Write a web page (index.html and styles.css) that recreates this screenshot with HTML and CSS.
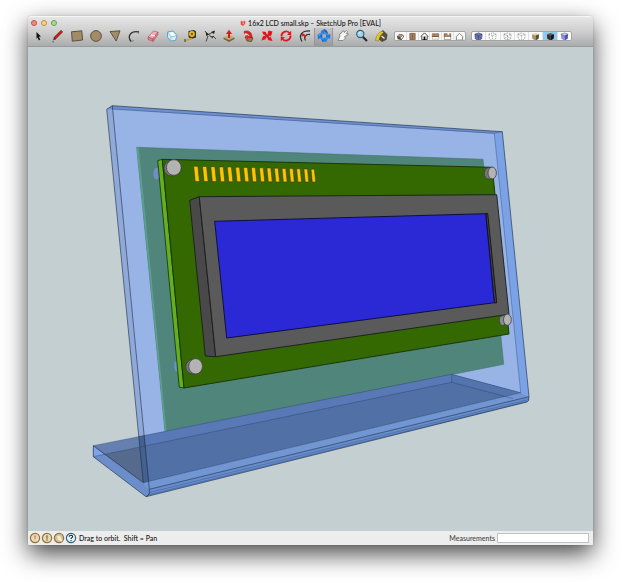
FILE: index.html
```html
<!DOCTYPE html>
<html lang="en">
<head>
<meta charset="utf-8">
<title>16x2 LCD small.skp – SketchUp Pro [EVAL]</title>
<link rel="stylesheet" href="styles.css">
</head>
<body>
<main class="window">
  <header class="chrome">
    <div class="titlebar">
      <div class="lights">
        <button class="light red" aria-label="Close"></button>
        <button class="light amber" aria-label="Minimize"></button>
        <button class="light green" aria-label="Zoom window"></button>
      </div>
      <h1 class="title">
        <svg class="doc" viewBox="0 0 8 8"><path d="M1 1l3 1 3-1v4L4 8 1 6z" fill="#e8503c"/><path d="M1 1l3 1 1-1-2-1z" fill="#f7c9c0"/><path d="M3 4l2-1v3z" fill="#fff" opacity=".7"/></svg>
        <span>16x2 LCD small.skp – SketchUp Pro [EVAL]</span>
      </h1>
    </div>
    <nav class="toolbar" aria-label="Tools">
      <div class="tools">
        <button class="tool" aria-label="Select"><svg viewBox="0 0 16 16"><path d="M5.500 4l4.500 4.500-2.200.3 1.500 2.800-1.400.8-1.400-2.900-1 1.200z" fill="#111"/></svg></button>
        <button class="tool" aria-label="Line"><svg viewBox="0 0 16 16"><path d="M4.500 10.500L12 3" stroke="#5a1512" stroke-width="2.600"/><path d="M4.500 10.500L12 3" stroke="#e2201d" stroke-width="1.700"/><path d="M3 12.500l1-3 1.800 1.800z" fill="#3a2a1c"/><path d="M2 13.500l2 .5" stroke="#555" stroke-width=".8"/></svg></button>
        <button class="tool" aria-label="Rectangle"><svg viewBox="0 0 16 16"><path d="M2.500 3.800l10.300-1 .8 9.200-10.300 1.200z" fill="#a38a68" stroke="#54493a" stroke-width=".9"/></svg></button>
        <button class="tool" aria-label="Circle"><svg viewBox="0 0 16 16"><circle cx="8" cy="8" r="5.400" fill="#a38a68" stroke="#54493a" stroke-width=".9"/></svg></button>
        <button class="tool" aria-label="Polygon"><svg viewBox="0 0 16 16"><path d="M3 3.600l10-.8L9.200 13z" fill="#a38a68" stroke="#54493a" stroke-width=".9"/></svg></button>
        <button class="tool" aria-label="Arc"><svg viewBox="0 0 16 16"><path d="M5 13.500C1 8 4.500 2.500 13 4" fill="none" stroke="#333" stroke-width="1.300"/><path d="M5 13.500l3-1M13 4l-1 2" stroke="#777" stroke-width=".8"/></svg></button>
        <button class="tool" aria-label="Eraser"><svg viewBox="0 0 16 16"><path d="M3 9l5.500-6 4.500 1-5 7z" fill="#f3a9b6" stroke="#b26572" stroke-width=".7"/><path d="M3 9l5 2v2.500l-5-2zM8 11l5-7v2.500l-5 7z" fill="#e07f90" stroke="#a85263" stroke-width=".6"/><path d="M6 7l4 1" stroke="#fff"/></svg></button>
        <button class="tool" aria-label="Make component"><svg viewBox="0 0 16 16"><path d="M3.500 4l5.500-1L13 7.500l-1.500 5-5 .5L3.500 9z" fill="#d6eef7" stroke="#62a5c1"/><path d="M3.500 4l3.500 5 6-1.500M7 9l-.5 4" fill="none" stroke="#7bb4cc" stroke-width=".7"/><path d="M5.500 5l3-.8 2.500 3-3 .8z" fill="#fff"/></svg></button>
        <button class="tool" aria-label="Tape measure"><svg viewBox="0 0 16 16"><path d="M5.500 3l5.500-1 2 1.500v6L8 11 5.500 9z" fill="#33302a"/><circle cx="9" cy="6" r="2.900" fill="#efbc1c"/><circle cx="9" cy="6" r="1.200" fill="#705d22"/><path d="M9 10.500L2.500 12.500" stroke="#d5a513" stroke-width="1.800"/><path d="M2 11v3" stroke="#333"/></svg></button>
        <button class="tool" aria-label="Dimension"><svg viewBox="0 0 16 16"><path d="M3 3l2 3M11 8l3 3M4 13.500L6 8M5.500 7L12 3.500M5 6c2 0 3 1 3.500 3" fill="none" stroke="#444"/><path d="M4 4l3 2.500L4 8zM13 2.500L9 4l3 2zM9 8l3 .5-2 2z" fill="#222"/></svg></button>
        <button class="tool" aria-label="Push/Pull"><svg viewBox="0 0 16 16"><path d="M2.500 9.500L8 7l5.500 2.500L8 12z" fill="#c9a56b"/><path d="M2.500 9.500L8 12l5.500-2.500V11L8 14l-5.500-3z" fill="#7e5e38"/><path d="M8 1.800L11 6H9v4H7V6H5z" fill="#e3161b"/></svg></button>
        <button class="tool" aria-label="Follow Me"><svg viewBox="0 0 16 16"><path d="M5 9l3-1.500 5 2.500-1.500 3.500L7 13z" fill="#9d7b4f" stroke="#503b22" stroke-width=".7"/><path d="M4 3.500c4.500-2 8.500 1 8 6.500l-2.500-.5c0-3-2-4.500-5-4z" fill="#df1f20" stroke="#7e1412" stroke-width=".5"/><path d="M5 7.500l5 .5-2.500 3.500z" fill="#e6251f"/><path d="M5 5.800c2 0 3.500.7 4 2" fill="none" stroke="#f6dcd6"/></svg></button>
        <button class="tool" aria-label="Move"><svg viewBox="0 0 16 16"><path d="M5 4.500l6 7M12 6l-8 4" stroke="#dd171b" stroke-width="2"/><path d="M9.500 2.500l4 1L12 8 8.500 6zM3 3.500l4.500.5L5 7.500zM2.500 12.500L4 8l3.500 3zM13.500 13L8.500 12l3-3.500z" fill="#dd171b"/></svg></button>
        <button class="tool" aria-label="Rotate"><svg viewBox="0 0 16 16"><path d="M3.500 8.500A4.600 4.600 0 0 1 11.500 5M12.500 7.500A4.600 4.600 0 0 1 4.500 11" fill="none" stroke="#dc1b1e" stroke-width="1.800"/><path d="M13.200 2.800V7H9zM2.800 13.200V9H7z" fill="#dc1b1e"/></svg></button>
        <button class="tool" aria-label="Offset"><svg viewBox="0 0 16 16"><path d="M5 13.500C1 7 5 2.500 13 3" fill="none" stroke="#333" stroke-width="1.300"/><path d="M8.500 12.500C6.500 9 8.500 6 13 6.500" fill="none" stroke="#333" stroke-width="1.300"/><path d="M9.500 8L5 4.500 4.500 8.500l2-.5 1.500 1.500z" fill="#dc1b1e"/></svg></button>
        <button class="tool active" aria-label="Orbit" aria-pressed="true"><svg viewBox="0 0 16 16"><path d="M7.500 2c4 1 5 6 2.500 10M6 4.500c-1.500 3-1 6 1.500 8.500" fill="none" stroke="#1c5fb5" stroke-width="2"/><path d="M2.500 7c3-2.500 8-2.500 11 1M3 9c3 2.500 7 2.500 10 .5" fill="none" stroke="#3794f5" stroke-width="2"/><path d="M9 1.500L4.500 3 8 6zM14.500 6l-.5 5-3.500-3zM1.500 6.500L2 11.500 5.500 9zM6 14l5-.5-2.500-4z" fill="#1f7ae4"/></svg></button>
        <button class="tool" aria-label="Pan"><svg viewBox="0 0 16 16"><path d="M3 12.500l2-4.500-.5-2 2-1 1-2 1.500 0 .3 1.500L11.500 2.500l1 1-1 2.500 1.500-.5 0 1.500-3.500 1.500 1 1.500-2.500 2.500z" fill="#f7f5f0" stroke="#777" stroke-width=".8"/></svg></button>
        <button class="tool" aria-label="Zoom"><svg viewBox="0 0 16 16"><path d="M8.500 8.500L13 13" stroke="#27292c" stroke-width="2.200"/><circle cx="6.300" cy="6" r="3.600" fill="#9fd4ec" stroke="#315a70" stroke-width="1.100"/><path d="M4.500 5.500l2-1.500" stroke="#fff"/></svg></button>
        <button class="tool" aria-label="Paint bucket"><svg viewBox="0 0 16 16"><path d="M6 7l4-4.500 4 4-.8 5L9 13.500 6 11z" fill="#57513c" stroke="#2c2a20" stroke-width=".6"/><path d="M2.500 12.500C3 8 5 5 9 3l1.500 1.500C7 7 6.500 10 5.500 13z" fill="#e5ca25" stroke="#7b6b16" stroke-width=".5"/><path d="M8.500 8l3 2.500" stroke="#f3eed8" stroke-width="1.300"/></svg></button>
      </div>
      <div class="segments views">
        <button aria-label="Iso"><svg viewBox="0 0 10 10"><path d="M1 5l3-3 4 1 1 2-3 4-4-1z" fill="#55483c"/><path d="M1.500 4.500l2.500-2 4 1-3 2z" fill="#b89d78"/><path d="M5 6l3-2v1.500L5.500 8z" fill="#eee"/></svg></button>
        <button aria-label="Top"><svg viewBox="0 0 10 10"><path d="M2 1.500h6v7H2z" fill="#a98157" stroke="#6e5335" stroke-width=".7"/><path d="M5 1.500v7" stroke="#6e5335" stroke-width=".7"/></svg></button>
        <button aria-label="Front"><svg viewBox="0 0 10 10"><path d="M1 5l4-4 4 4M2 4.500v4h6v-4" fill="#fff" stroke="#333"/><path d="M4 5h2v4H4z" fill="#111"/></svg></button>
        <button aria-label="Right"><svg viewBox="0 0 10 10"><path d="M1 1.500h8V5H1z" fill="#a98157"/><path d="M1.500 2v6h7V2" fill="none" stroke="#99938b" stroke-width=".6"/><path d="M1 5h8" stroke="#6e5335"/></svg></button>
        <button aria-label="Back"><svg viewBox="0 0 10 10"><path d="M1 1.500h8V5H1z" fill="#a98157"/><path d="M1.500 2v6.500h7V2M1 5h8" fill="none" stroke="#77685a" stroke-width=".7"/><path d="M5 1h2v2H5z" fill="#fff"/></svg></button>
        <button aria-label="Left"><svg viewBox="0 0 10 10"><path d="M1.500 5L5 1.500 8.500 5v4h-7z" fill="#fff" stroke="#555" stroke-width=".8"/></svg></button>
      </div>
      <div class="segments styles">
        <button aria-label="X-ray"><svg viewBox="0 0 10 10"><path d="M1 2.500L5 1l4 1.500-.5 5L5 9.500l-3.500-2z" fill="#747cae" stroke="#343b70" stroke-width=".7"/><path d="M1 2.500l4 1.500 4-1.500M5 4v5.500M2 7l3-2 3 2" fill="none" stroke="#30396f" stroke-width=".6"/></svg></button>
        <button aria-label="Back edges"><svg viewBox="0 0 10 10"><path d="M1 2.500L5 1l4 1.500-.5 5L5 9.500l-3.500-2zM1 2.500l4 1.500 4-1.500M5 4v5.500" fill="#fff" stroke="#777" stroke-width=".7" stroke-dasharray="1.500 1"/></svg></button>
        <button aria-label="Wireframe"><svg viewBox="0 0 10 10"><path d="M1 2.500L5 1l4 1.500-.5 5L5 9.500l-3.500-2zM1 2.500l4 1.500 4-1.500M5 4v5.500M2 7l3-2 3 2" fill="#fff" stroke="#777" stroke-width=".7" stroke-dasharray="2 1"/></svg></button>
        <button aria-label="Hidden line"><svg viewBox="0 0 10 10"><path d="M1 2.500L5 1l4 1.500-.5 5L5 9.500l-3.500-2zM1 2.500l4 1.500 4-1.500M5 4v5.500" fill="#fff" stroke="#888" stroke-width=".7" stroke-dasharray="2 .8"/></svg></button>
        <button aria-label="Shaded"><svg viewBox="0 0 10 10"><path d="M1 2.500L5 1l4 1.500L5 4z" fill="#e4d6a5"/><path d="M1 2.500L5 4v5.500l-3.500-2z" fill="#aa9865"/><path d="M9 2.500L5 4v5.500l3.500-2z" fill="#5e5132"/></svg></button>
        <button class="on" aria-label="Shaded with textures" aria-pressed="true"><svg viewBox="0 0 10 10"><path d="M1 2.500L5 1l4 1.500L5 4z" fill="#6a5844"/><path d="M1 2.500L5 4v5.500l-3.500-2z" fill="#352d25"/><path d="M9 2.500L5 4v5.500l3.500-2z" fill="#17130f"/></svg></button>
        <button aria-label="Monochrome"><svg viewBox="0 0 10 10"><path d="M1 2.500L5 1l4 1.500L5 4z" fill="#dedbc8"/><path d="M1 2.500L5 4v5.500l-3.500-2z" fill="#8b92d5"/><path d="M9 2.500L5 4v5.500l3.500-2z" fill="#4a53a5"/><path d="M1 2.500L5 1l4 1.500L5 4z" fill="none" stroke="#5c65c5" stroke-width=".7"/></svg></button>
      </div>
    </nav>
  </header>

  <svg class="model" viewBox="28 47 565 484" role="img" aria-label="LCD module on a clear acrylic stand">
    <!-- acrylic panel -->
    <path d="M112.300 105.700L502.300 131.700 529 397 149.300 490z" fill="#98b4e6"/>
    <path d="M106.700 109.300l5.600-3.600L149.300 490l-6-7.300z" fill="#8fa9d8"/>
    <path d="M106.700 109.300l5.600-3.600 390 26-8 2-382-24.500z" fill="#6d8fcd"/>
    <path d="M502.300 131.700l-8 1.600 26.400 259.400 8.300 4z" fill="#7ba2e6"/>
    <!-- back sheet -->
    <path d="M136.700 147.300L483 159.300l20.700 205L165 431.300z" fill="#4f857b" stroke="#47766f" stroke-width=".6"/>
    <path d="M136.700 147.300l2 .2L166.500 431l-1.500.3z" fill="#5c9f8e"/>
    <!-- base -->
    <path d="M93.300 445.700L140 436.400l4.300 46.300-51-26z" fill="#6580b0"/>
    <path d="M139 436.600l312.700-62.300 69 18.400L143.300 482.700z" fill="#5879b5"/>
    <path d="M104 454.500L141 447l2.300 35.700z" fill="#566a8d"/>
    <path d="M141 447l310.700-64.700 54 14L143.300 482.700z" fill="#5170a5"/>
    <path d="M139 436.600l5.500-1.100 4.800 48-6 -.8z" fill="#45618f"/>
    <path d="M451.700 374.300l69 18.400-15 3.600-54-14z" fill="#5474ae"/>
    <path d="M93.300 445.700v11l52.700 40 3.300-2.700v-4.500l-6-6.800z" fill="#6b8dc9"/>
    <path d="M93.300 445.700l11 8.800-11 2.200z" fill="#7ea3e6"/>
    <path d="M143.300 482.700l377.400-90 8.300 4-379.700 92.600z" fill="#7196d2"/>
    <path d="M149.300 489.300L529 396.700v3.500l-2 1.800L146 496.700z" fill="#688dcc"/>
    <path d="M149.300 492.500L528 399.700M148 495L527 401.500" stroke="#4f70aa" stroke-width=".9"/>
    <g fill="none" stroke="#1b2a45" stroke-opacity=".75" stroke-width=".8" stroke-linejoin="round">
      <path d="M106.700 109.300l5.600-3.600L502.300 131.700 529 396.700l-.5 4-1.500 1.300L146 496.700l-52.700-40v-11l50 37L106.700 109.300"/>
      <path d="M112.300 105.700L149.300 489.300v4.700l-3.300 2.700M149.300 489.300L529 396.700"/>
    </g>
    <g fill="none" stroke="#20365f" stroke-opacity=".5" stroke-width=".7">
      <path d="M93.300 445.700L451.700 374.300l69 18.400-377.400 90M451.700 374.300v8L93.300 456.700M451.700 382.300L513 398.500"/>
      <path d="M112.300 109l382 24.300 26.400 259.400M494.300 133.300l8-1.600"/>
    </g>
    <!-- circuit board -->
    <ellipse cx="156.500" cy="173.500" rx="3.200" ry="6" fill="#6d8fc8"/>
    <ellipse cx="177" cy="366" rx="3" ry="5.500" fill="#6d8fc8"/>
    <path d="M157.700 160.700l4.600-1.400L184 388l-4.700-.7z" fill="#62b01e" stroke="#16300a" stroke-width=".8"/>
    <path d="M162.300 159.300l330 8L509 334 184 388z" fill="#346800" stroke="#173000" stroke-width=".9"/>
    <g fill="#ffc400" stroke="#3a3000" stroke-width=".5">
      <path d="M193.700 166.300h4.200l1.500 15.200h-4.200z"/><path d="M202.500 166.500h4.100l1.500 15h-4.100z"/><path d="M210.800 166.700h4.100l1.500 14.900h-4.100z"/><path d="M219.200 166.900h4.100l1.500 14.800h-4.100z"/>
      <path d="M227.300 167h4.100l1.500 14.700h-4.100z"/><path d="M235.500 167.200h4l1.500 14.500h-4z"/><path d="M243.500 167.400h4l1.500 14.300h-4z"/><path d="M251.300 167.600h4l1.400 14.200h-4z"/>
      <path d="M259.400 167.800h3.900l1.400 14h-3.900z"/><path d="M266.900 168h3.900l1.400 13.800h-3.900z"/><path d="M274.400 168.200h3.800l1.400 13.700h-3.800z"/><path d="M282 168.400h3.800l1.300 13.500h-3.800z"/>
      <path d="M289.300 168.600h3.700l1.300 13.300h-3.700z"/><path d="M296.600 168.800h3.600l1.300 13.200h-3.600z"/><path d="M303.900 169h3.600l1.300 13h-3.600z"/><path d="M311 169.200h3.400l1.300 12.800h-3.400z"/>
    </g>
    <!-- display bezel and screen -->
    <path d="M189.700 200.300l9.600-3.600 16.400 160-10.400-.7z" fill="#494949" stroke="#1c1c1c" stroke-width=".9"/>
    <path d="M199.300 196.700l297.400-2L509 314.300 215.700 356.700z" fill="#5a5a5a" stroke="#1c1c1c" stroke-width=".9"/>
    <path d="M485.700 213.500h2l9 89.200-2.400.3z" fill="#44423d" stroke="#111" stroke-width=".9"/>
    <path d="M214.700 221.300l271-7.600 8.600 89L226.700 338z" fill="#2b29d5" stroke="#10103c"/>
    <!-- mounting screws -->
    <g stroke="#3d3d3d" stroke-width=".8">
      <ellipse cx="171" cy="168.300" rx="7" ry="7.700" fill="#777"/><ellipse cx="173.800" cy="167.500" rx="7.400" ry="7.900" fill="#b3b3b3"/>
      <ellipse cx="488.500" cy="173.400" rx="4.200" ry="5.700" fill="#777"/><ellipse cx="492.200" cy="173" rx="4.200" ry="5.900" fill="#b3b3b3"/>
      <ellipse cx="192.800" cy="366.700" rx="7" ry="7.300" fill="#777"/><ellipse cx="195.600" cy="366.300" rx="6.900" ry="7.700" fill="#b3b3b3"/>
      <path d="M500 316.500c-2 6 1 10 4 9l3-11z" fill="#8a8a8a"/><ellipse cx="507.400" cy="319.700" rx="3.900" ry="5.600" fill="#b3b3b3"/>
    </g>
  </svg>

  <footer class="status">
    <button class="badge" aria-label="Geo-location"><svg viewBox="0 0 12 12"><circle cx="6" cy="6" r="4.600" fill="#eadcb8" stroke="#91703c" stroke-width="1.200"/><path d="M4.500 3.500h3L6.300 8h-.6z" fill="#dc9b86"/></svg></button>
    <button class="badge" aria-label="Credits"><svg viewBox="0 0 12 12"><circle cx="6" cy="6" r="4.600" fill="#eadcb8" stroke="#91703c" stroke-width="1.200"/><path d="M6 3v6M4.800 5h2.400" stroke="#8f805f" stroke-width="1.200"/></svg></button>
    <button class="badge" aria-label="Sign in"><svg viewBox="0 0 12 12"><circle cx="6" cy="6" r="4.600" fill="#d8c496" stroke="#91703c" stroke-width="1.200"/><path d="M4 4h3l1 2v2H5z" fill="#f3ead0"/><path d="M7 7l2 2" stroke="#fff" stroke-width="1.500"/></svg></button>
    <button class="badge" aria-label="Help"><svg viewBox="0 0 12 12"><circle cx="6" cy="6" r="4.600" fill="#e9f2f6" stroke="#2c6482" stroke-width="1.200"/><path d="M4.300 4.700C4.500 2.600 7.800 2.900 7.600 4.700 7.500 5.700 6 5.700 6 7" fill="none" stroke="#1c1c1c" stroke-width="1.100"/><circle cx="6" cy="8.600" r=".7" fill="#1c1c1c"/></svg></button>
    <p class="hint">Drag to orbit.&nbsp; Shift = Pan</p>
    <label class="measure" for="measure">Measurements</label>
    <input class="entry" id="measure" type="text">
  </footer>
</main>
</body>
</html>
```

FILE: styles.css
```css
* {
  box-sizing: border-box;
}

body {
  margin: 0;
  min-height: 100vh;
  display: flex;
  padding: 16px 27px 38px 28px;
  background: #fff;
  color: #111;
  font-family: Lato, "Open Sans", sans-serif;
  font-size: 7px;
  font-weight: 500;
  line-height: 12px;
}

button {
  margin: 0;
  padding: 0;
  border: 0;
  background: none;
  font: inherit;
}

svg {
  display: block;
}

.window {
  flex: 1;
  display: flex;
  flex-direction: column;
  border-radius: 3px 3px 1px 1px;
  background: #c4cfd1;
  box-shadow: 0 9px 24px rgba(0, 0, 0, 0.72), 0 0 2px rgba(0, 0, 0, 0.2);
}

.chrome {
  border-radius: 3px 3px 0 0;
  border-top: 1px solid #f6f6f6;
  border-bottom: 1px solid #969c9d;
  background: linear-gradient(#e6e6e6, #cecece 50%, #acacac);
}

.titlebar {
  display: grid;
  grid-template-columns: 1fr auto 1fr;
  align-items: center;
  height: 11px;
}

.lights {
  display: flex;
  gap: 4px;
  padding-left: 3px;
}

.light {
  width: 6px;
  height: 6px;
  border-radius: 50%;
  border: 1px solid;
}

.red {
  border-color: #c0514b;
  background: #f28a84;
}

.amber {
  border-color: #c08d45;
  background: #f9d27c;
}

.green {
  border-color: #6c9f50;
  background: #aadb8b;
}

.title {
  display: flex;
  align-items: center;
  gap: 2px;
  margin: 0;
  font-size: 7px;
  font-weight: 500;
}

.doc {
  width: 6px;
  height: 6px;
}

.toolbar {
  display: flex;
  height: 18px;
}

.tools {
  display: flex;
  padding-left: 1px;
}

.tool {
  width: 19px;
  display: flex;
  justify-content: center;
}

.tool svg {
  width: 16px;
  height: 16px;
}

.active {
  border-left: 1px solid #969696;
  border-right: 1px solid #969696;
  background: linear-gradient(#c4c4c4, #999);
}

.segments {
  display: flex;
  height: 10px;
  margin-top: 3px;
  border: 1px solid #a5a5a5;
  border-radius: 2px;
  background: #fafafa;
  overflow: hidden;
}

.segments button {
  flex: 1;
  display: flex;
  align-items: center;
  justify-content: center;
}

.segments button + button {
  border-left: 1px solid #e0e0e0;
}

.segments svg {
  width: 9px;
  height: 9px;
  flex: none;
}

.views {
  width: 72px;
  margin-left: 4px;
}

.styles {
  width: 101px;
  margin-left: 5px;
}

.segments .on {
  background: #8fc9f7;
}

.model {
  flex: 1;
  width: 100%;
  min-height: 0;
}

.status {
  display: flex;
  align-items: center;
  height: 14px;
  padding: 0 4px 0 1px;
  border-radius: 0 0 1px 1px;
  background: #ededed;
}

.badge svg {
  width: 12px;
  height: 12px;
}

.hint {
  margin: 0 auto 0 2px;
}

.measure {
  margin-right: 2px;
  color: #444;
}

.entry {
  width: 92px;
  height: 10px;
  padding: 0 2px;
  border: 1px solid #c2c2c2;
  background: #fff;
  font: inherit;
}
```
